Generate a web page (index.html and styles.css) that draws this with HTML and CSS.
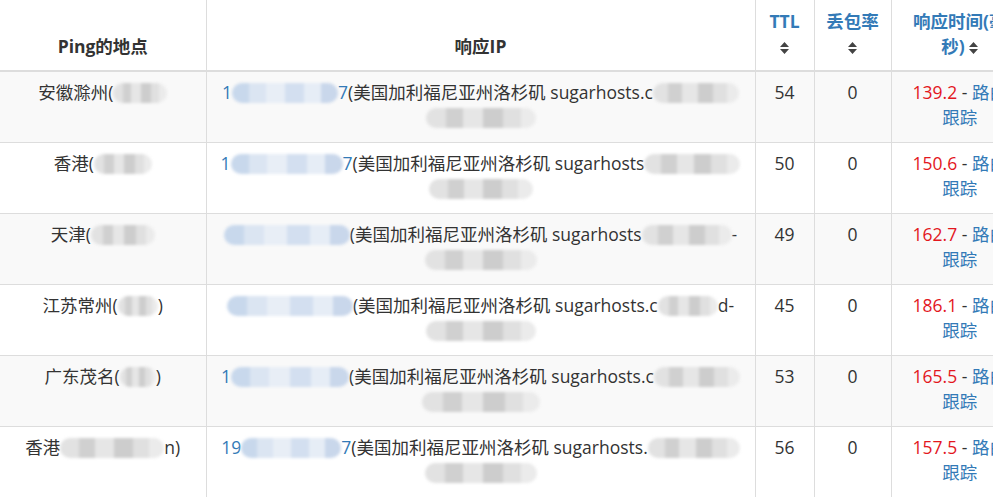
FILE: index.html
```html
<!DOCTYPE html>
<html lang="zh-CN">
<head>
    <meta charset="UTF-8">
    <meta name="viewport" content="width=device-width, initial-scale=1.0">
    <title>Ping 检测结果</title>
    <link rel="stylesheet" href="styles.css">
</head>
<body>

    <table class="ping-table">
        <colgroup>
            <col class="col-loc">
            <col class="col-ip">
            <col class="col-ttl">
            <col class="col-loss">
            <col class="col-time">
        </colgroup>
        <thead>
            <tr>
                <th>Ping的地点</th>
                <th>响应IP</th>
                <th class="sortable">TTL <span class="sort-icon"><svg viewBox="0 0 9 12" width="9" height="12"><path d="M4.5 0 L9 5 H0 Z M0 7 H9 L4.5 12 Z"/></svg></span></th>
                <th class="sortable">丢包率 <span class="sort-icon"><svg viewBox="0 0 9 12" width="9" height="12"><path d="M4.5 0 L9 5 H0 Z M0 7 H9 L4.5 12 Z"/></svg></span></th>
                <th class="sortable">响应时间(毫秒) <span class="sort-icon"><svg viewBox="0 0 9 12" width="9" height="12"><path d="M4.5 0 L9 5 H0 Z M0 7 H9 L4.5 12 Z"/></svg></span></th>
            </tr>
        </thead>
        <tbody>
            <!-- row 1 -->
            <tr>
                <td>安徽滁州(<span class="mask gray w-54"></span></td>
                <td><span class="line"><a class="ip">1<span class="mask blue w-106"></span>7</a>(美国加利福尼亚州洛杉矶 sugarhosts.c<span class="mask gray w-86"></span></span> <span class="mask gray w-110"></span></td>
                <td>54</td>
                <td>0</td>
                <td><span class="ms">139.2</span> - <a class="trace"><span class="nb">路由</span><span class="nb">跟踪</span></a></td>
            </tr>
            <!-- row 2 -->
            <tr>
                <td>香港(<span class="mask gray w-58"></span></td>
                <td><span class="line"><a class="ip">1<span class="mask blue w-112"></span>7</a>(美国加利福尼亚州洛杉矶 sugarhosts<span class="mask gray w-96"></span></span> <span class="mask gray w-104"></span></td>
                <td>50</td>
                <td>0</td>
                <td><span class="ms">150.6</span> - <a class="trace"><span class="nb">路由</span><span class="nb">跟踪</span></a></td>
            </tr>
            <!-- row 3 -->
            <tr>
                <td>天津(<span class="mask gray w-64"></span></td>
                <td><span class="line"><a class="ip"><span class="mask blue w-126"></span></a>(美国加利福尼亚州洛杉矶 sugarhosts<span class="mask gray w-90"></span>-</span> <span class="mask gray w-112"></span></td>
                <td>49</td>
                <td>0</td>
                <td><span class="ms">162.7</span> - <a class="trace"><span class="nb">路由</span><span class="nb">跟踪</span></a></td>
            </tr>
            <!-- row 4 -->
            <tr>
                <td>江苏常州(<span class="mask gray w-40"></span>)</td>
                <td><span class="line"><a class="ip"><span class="mask blue w-126"></span></a>(美国加利福尼亚州洛杉矶 sugarhosts.c<span class="mask gray w-60"></span>d-</span> <span class="mask gray w-110"></span></td>
                <td>45</td>
                <td>0</td>
                <td><span class="ms">186.1</span> - <a class="trace"><span class="nb">路由</span><span class="nb">跟踪</span></a></td>
            </tr>
            <!-- row 5 -->
            <tr>
                <td>广东茂名(<span class="mask gray w-36"></span>)</td>
                <td><span class="line"><a class="ip">1<span class="mask blue w-118"></span></a>(美国加利福尼亚州洛杉矶 sugarhosts.c<span class="mask gray w-86"></span></span> <span class="mask gray w-118"></span></td>
                <td>53</td>
                <td>0</td>
                <td><span class="ms">165.5</span> - <a class="trace"><span class="nb">路由</span><span class="nb">跟踪</span></a></td>
            </tr>
            <!-- row 6 -->
            <tr>
                <td>香港<span class="mask gray w-104"></span>n)</td>
                <td><span class="line"><a class="ip">19<span class="mask blue w-100"></span>7</a>(美国加利福尼亚州洛杉矶 sugarhosts.<span class="mask gray w-92"></span></span> <span class="mask gray w-112"></span></td>
                <td>56</td>
                <td>0</td>
                <td><span class="ms">157.5</span> - <a class="trace"><span class="nb">路由</span><span class="nb">跟踪</span></a></td>
            </tr>
        </tbody>
    </table>

</body>
</html>
```

FILE: styles.css
```css
/* Basic Reset */
* {
    margin: 0;
    padding: 0;
    box-sizing: border-box;
}

html,
body {
    overflow: hidden;
}

body {
    font-family: 'Open Sans', 'Noto Sans CJK SC', sans-serif;
    font-size: 17.5px;
    line-height: 25px;
    color: #333;
    background: #fff;
}

/* Table */
.ping-table {
    width: 1028px;
    table-layout: fixed;
    border-collapse: collapse;
    border-spacing: 0;
}

.col-loc { width: 206px; }
.col-ip { width: 549px; }
.col-ttl { width: 59px; }
.col-loss { width: 77px; }
.col-time { width: 137px; }

.ping-table th,
.ping-table td {
    text-align: center;
    border-left: 1px solid #ddd;
}

.ping-table th:first-child,
.ping-table td:first-child {
    border-left: none;
}

.ping-table th {
    height: 71px;
    padding: 7px 10px 11px;
    vertical-align: bottom;
    font-weight: 700;
    border-bottom: 2px solid #ddd;
}

.ping-table th.sortable {
    color: #337ab7;
}

.sort-icon svg {
    fill: #444;
    vertical-align: -1px;
}

.ping-table td {
    height: 71px;
    padding: 8px 10px 12px;
    vertical-align: top;
    border-top: 1px solid #ddd;
}

.ping-table tbody tr:nth-child(odd) {
    background-color: #f9f9f9;
}

.ping-table tbody tr:last-child td {
    border-bottom: 1px solid #ddd;
}

/* Cell contents */
.line,
.nb {
    white-space: nowrap;
}

.ip {
    color: #337ab7;
}

.ms {
    color: #e3171e;
}

.trace {
    color: #337ab7;
}

/* Blurred-out data */
.mask {
    display: inline-block;
    height: 20px;
    vertical-align: -4px;
    border-radius: 10px;
    filter: blur(1.5px);
}

.mask.gray {
    background: linear-gradient(90deg, #e2e2e2 0 18%, #d0d0d0 18% 34%, #e6e6e6 34% 52%, #cdcdcd 52% 70%, #e0e0e0 70% 86%, #ebebeb 86%);
}

.mask.blue {
    background: linear-gradient(90deg, #c8d8ec 0 16%, #dbe5f2 16% 32%, #e8eef6 32% 50%, #d3dff0 50% 68%, #e6edf6 68% 84%, #c9d7eb 84%);
}

.w-36 { width: 36px; }
.w-40 { width: 40px; }
.w-54 { width: 54px; }
.w-58 { width: 58px; }
.w-60 { width: 60px; }
.w-64 { width: 64px; }
.w-86 { width: 86px; }
.w-90 { width: 90px; }
.w-92 { width: 92px; }
.w-96 { width: 96px; }
.w-100 { width: 100px; }
.w-104 { width: 104px; }
.w-106 { width: 106px; }
.w-110 { width: 110px; }
.w-112 { width: 112px; }
.w-118 { width: 118px; }
.w-126 { width: 126px; }
```
